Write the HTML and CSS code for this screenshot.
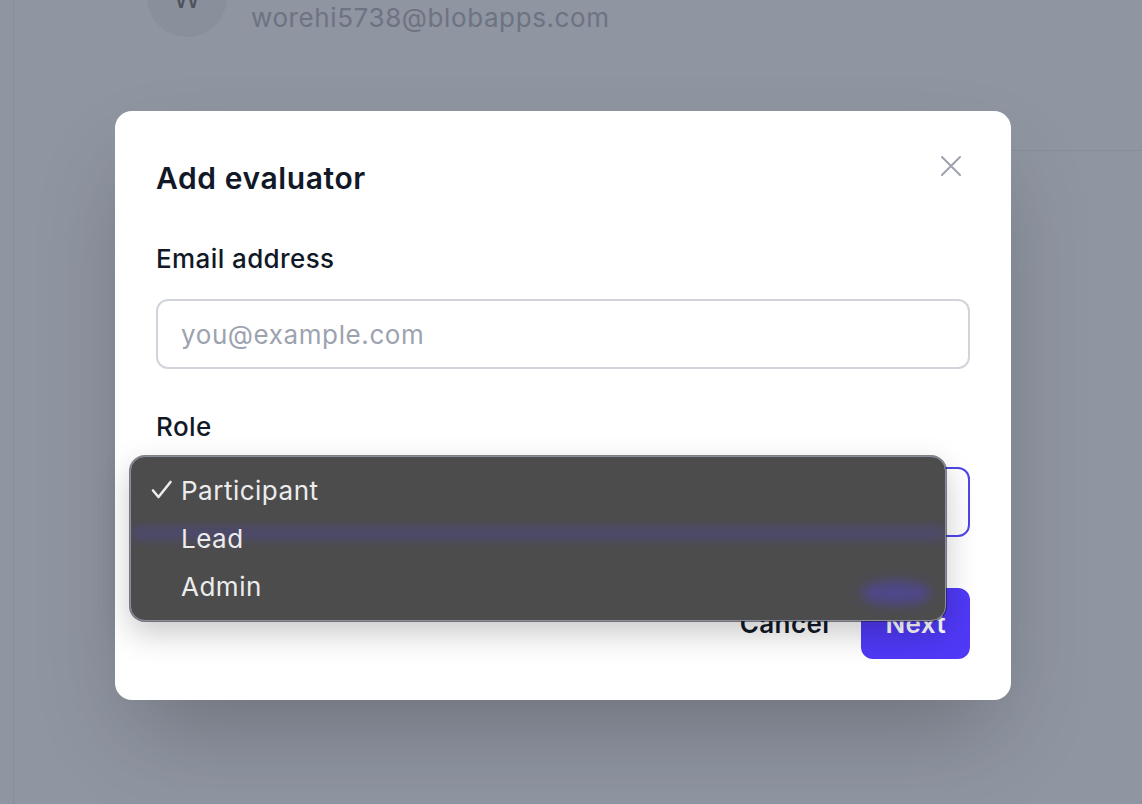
FILE: index.html
```html
<!DOCTYPE html>
<html lang="en">
<head>
<meta charset="utf-8">
<title>Add evaluator</title>
<link rel="stylesheet" href="styles.css">
</head>
<body>
<div class="app">
  <div class="rail"></div>
  <main class="main">
    <div class="member">
      <div class="avatar">W</div>
      <div class="member-email">worehi5738@blobapps.com</div>
    </div>
    <div class="divider"></div>
  </main>
</div>

<div class="modal" role="dialog" aria-labelledby="modal-title">
  <div class="modal-head">
    <h2 id="modal-title" class="modal-title">Add evaluator</h2>
    <button class="close" aria-label="Close">
      <svg width="24" height="24" viewBox="0 0 24 24" fill="none" stroke="currentColor" stroke-width="2" stroke-linecap="round"><path d="M3 3 L21 21 M21 3 L3 21"/></svg>
    </button>
  </div>
  <label class="field-label">Email address</label>
  <div class="input"><span class="placeholder">you@example.com</span></div>
  <label class="field-label role-label">Role</label>
  <div class="select"><span class="select-value">Participant</span></div>
  <div class="actions">
    <button class="btn btn-cancel">Cancel</button>
    <button class="btn btn-next">Next</button>
  </div>
</div>

<div class="menu">
  <div class="menu-glow glow-band"></div>
  <div class="menu-glow glow-blob"></div>
  <div class="menu-item selected"><span class="check"><svg width="22" height="20" viewBox="0 0 22 20" fill="none" stroke="currentColor" stroke-width="2.6" stroke-linecap="round" stroke-linejoin="round"><path d="M2 10.5 L7.5 17 L19.5 2"/></svg></span>Participant</div>
  <div class="menu-item"><span class="check"></span>Lead</div>
  <div class="menu-item"><span class="check"></span>Admin</div>
</div>
</body>
</html>
```
FILE: styles.css
```css
* { box-sizing: border-box; }
html, body { margin: 0; padding: 0; }
body {
  width: 1142px;
  height: 804px;
  overflow: hidden;
  background: #8f95a1;
  font-family: Inter, "Noto Sans", sans-serif;
  position: relative;
}
.app {
  display: flex;
  height: 804px;
}
.rail {
  width: 14px;
  border-right: 1px solid #878d99;
  flex: none;
}
.main {
  flex: 1;
  padding-left: 133px;
}
.member {
  display: flex;
  align-items: center;
  gap: 24px;
  margin-top: -43px;
}
.avatar {
  width: 80px;
  height: 80px;
  border-radius: 50%;
  background: #898f9b;
  color: #4e525b;
  font-size: 28px;
  display: flex;
  align-items: flex-end;
  justify-content: center;
  padding-bottom: 25px;
  line-height: 1;
}
.member-email {
  font-size: 26px;
  letter-spacing: 0.6px;
  color: #6e7382;
  margin-top: 40px;
}
.divider {
  margin-top: 113px;
  height: 1px;
  background: #878d99;
}

.modal {
  position: absolute;
  left: 115px;
  top: 111px;
  width: 896px;
  background: #fff;
  border-radius: 17px;
  padding: 48px 41px 41px;
  box-shadow: 0 44px 88px -21px rgba(0,0,0,0.25);
}
.modal-head {
  display: flex;
  justify-content: space-between;
  align-items: flex-start;
}
.modal-title {
  margin: 0;
  font-size: 30px;
  letter-spacing: 0.6px;
  line-height: 38px;
  font-weight: 600;
  color: #111827;
}
.close {
  border: 0;
  background: none;
  padding: 0;
  color: #9ca3af;
  margin-top: -5px;
  margin-right: 7px;
  display: flex;
}
.field-label {
  display: block;
  font-size: 26px;
  letter-spacing: 0.4px;
  font-weight: 500;
  line-height: 32px;
  color: #111827;
  margin-top: 46px;
}
.role-label { margin-top: 42px; }
.input, .select {
  margin-top: 24px;
  height: 70px;
  border: 2px solid #d1d5db;
  border-radius: 12px;
  display: flex;
  align-items: center;
  padding: 0 23px;
  font-size: 26px;
  letter-spacing: 0.6px;
}
.placeholder { color: #9ca3af; }
.select {
  border-color: #4f46e5;
  color: #111827;
}
.actions {
  display: flex;
  justify-content: flex-end;
  gap: 8px;
  margin-top: 51px;
}
.btn {
  font-family: inherit;
  font-size: 26px;
  letter-spacing: 0.4px;
  font-weight: 600;
  height: 71px;
  padding: 0 24px;
  border-radius: 12px;
  border: 0;
}
.btn-cancel { background: transparent; color: #111827; }
.btn-next { background: #4f39f6; color: #fff; }

.menu {
  position: absolute;
  left: 130px;
  top: 456px;
  width: 816px;
  height: 165px;
  border-radius: 15px;
  background: #4c4c4d;
  border: 1px solid #8a8fa0;
  box-shadow: 0 0 0 1px rgba(30,30,40,0.55), 0 12px 32px rgba(0,0,0,0.22);
  padding-top: 9px;
  overflow: hidden;
}
.menu-glow {
  position: absolute;
  filter: blur(6px);
  pointer-events: none;
}
.glow-band {
  left: 0; right: 0;
  top: 72px;
  height: 8px;
  background: rgba(80,68,170,0.6);
}
.glow-blob {
  left: 730px;
  top: 124px;
  width: 70px;
  height: 24px;
  border-radius: 50%;
  background: rgba(80,68,180,0.6);
}
.menu-item {
  position: relative;
  display: flex;
  align-items: center;
  height: 48px;
  font-size: 26px;
  letter-spacing: 0.5px;
  color: #ececec;
}
.check {
  width: 50px;
  display: flex;
  justify-content: flex-end;
  padding-right: 8px;
  color: #ececec;
}
```
